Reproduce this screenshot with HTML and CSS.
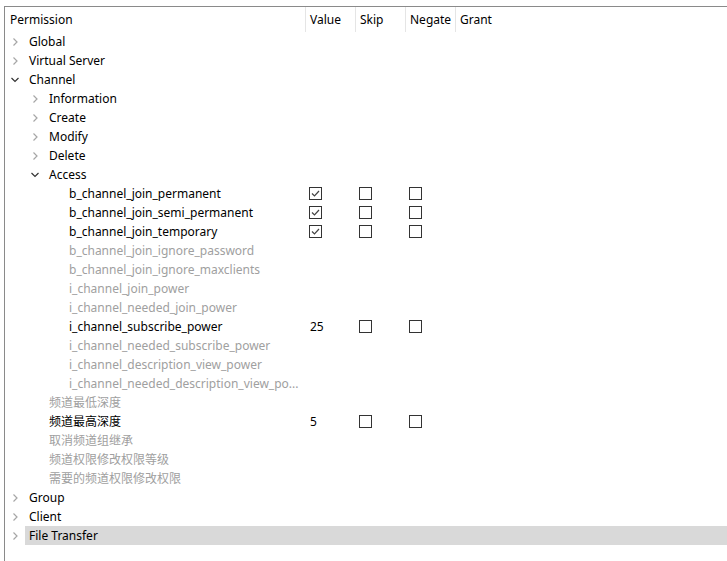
FILE: index.html
```html
<!DOCTYPE html>
<html>
<head>
<meta charset="utf-8">
<link rel="stylesheet" href="styles.css">
</head>
<body>
<div class="panel">
  <div class="header">
    <div class="h-name">Permission</div>
    <div class="h-col">Value</div>
    <div class="h-col">Skip</div>
    <div class="h-col">Negate</div>
    <div class="h-col h-last">Grant</div>
  </div>
  <div class="tree">
    <div class="row l0"><span class="arrow"><svg viewBox="0 0 8 10" width="8" height="10"><polyline points="2.5,1.5 6,5 2.5,8.5" class="chev"/></svg></span><div class="main"><span class="label">Global</span></div></div>
    <div class="row l0"><span class="arrow"><svg viewBox="0 0 8 10" width="8" height="10"><polyline points="2.5,1.5 6,5 2.5,8.5" class="chev"/></svg></span><div class="main"><span class="label">Virtual Server</span></div></div>
    <div class="row l0"><span class="arrow"><svg viewBox="0 0 10 8" width="10" height="8"><polyline points="1.5,2 5,5.5 8.5,2" class="chev open"/></svg></span><div class="main"><span class="label">Channel</span></div></div>
    <div class="row l1"><span class="arrow"><svg viewBox="0 0 8 10" width="8" height="10"><polyline points="2.5,1.5 6,5 2.5,8.5" class="chev"/></svg></span><div class="main"><span class="label">Information</span></div></div>
    <div class="row l1"><span class="arrow"><svg viewBox="0 0 8 10" width="8" height="10"><polyline points="2.5,1.5 6,5 2.5,8.5" class="chev"/></svg></span><div class="main"><span class="label">Create</span></div></div>
    <div class="row l1"><span class="arrow"><svg viewBox="0 0 8 10" width="8" height="10"><polyline points="2.5,1.5 6,5 2.5,8.5" class="chev"/></svg></span><div class="main"><span class="label">Modify</span></div></div>
    <div class="row l1"><span class="arrow"><svg viewBox="0 0 8 10" width="8" height="10"><polyline points="2.5,1.5 6,5 2.5,8.5" class="chev"/></svg></span><div class="main"><span class="label">Delete</span></div></div>
    <div class="row l1"><span class="arrow"><svg viewBox="0 0 10 8" width="10" height="8"><polyline points="1.5,2 5,5.5 8.5,2" class="chev open"/></svg></span><div class="main"><span class="label">Access</span></div></div>

    <div class="row l2"><span class="arrow"></span><div class="main"><span class="label">b_channel_join_permanent</span><span class="cell"><span class="cb"><svg viewBox="0 0 11 11" width="11" height="11"><polyline points="2,5.5 4.5,8 9,3" class="tick"/></svg></span></span><span class="cell"><span class="cb"></span></span><span class="cell"><span class="cb"></span></span></div></div>
    <div class="row l2"><span class="arrow"></span><div class="main"><span class="label">b_channel_join_semi_permanent</span><span class="cell"><span class="cb"><svg viewBox="0 0 11 11" width="11" height="11"><polyline points="2,5.5 4.5,8 9,3" class="tick"/></svg></span></span><span class="cell"><span class="cb"></span></span><span class="cell"><span class="cb"></span></span></div></div>
    <div class="row l2"><span class="arrow"></span><div class="main"><span class="label">b_channel_join_temporary</span><span class="cell"><span class="cb"><svg viewBox="0 0 11 11" width="11" height="11"><polyline points="2,5.5 4.5,8 9,3" class="tick"/></svg></span></span><span class="cell"><span class="cb"></span></span><span class="cell"><span class="cb"></span></span></div></div>
    <div class="row l2 dis"><span class="arrow"></span><div class="main"><span class="label">b_channel_join_ignore_password</span></div></div>
    <div class="row l2 dis"><span class="arrow"></span><div class="main"><span class="label">b_channel_join_ignore_maxclients</span></div></div>
    <div class="row l2 dis"><span class="arrow"></span><div class="main"><span class="label">i_channel_join_power</span></div></div>
    <div class="row l2 dis"><span class="arrow"></span><div class="main"><span class="label">i_channel_needed_join_power</span></div></div>
    <div class="row l2"><span class="arrow"></span><div class="main"><span class="label">i_channel_subscribe_power</span><span class="cell val">25</span><span class="cell"><span class="cb"></span></span><span class="cell"><span class="cb"></span></span></div></div>
    <div class="row l2 dis"><span class="arrow"></span><div class="main"><span class="label">i_channel_needed_subscribe_power</span></div></div>
    <div class="row l2 dis"><span class="arrow"></span><div class="main"><span class="label">i_channel_description_view_power</span></div></div>
    <div class="row l2 dis"><span class="arrow"></span><div class="main"><span class="label">i_channel_needed_description_view_po...</span></div></div>

    <div class="row l1 dis"><span class="arrow"></span><div class="main"><span class="label cjk">频道最低深度</span></div></div>
    <div class="row l1"><span class="arrow"></span><div class="main"><span class="label cjk">频道最高深度</span><span class="cell val">5</span><span class="cell"><span class="cb"></span></span><span class="cell"><span class="cb"></span></span></div></div>
    <div class="row l1 dis"><span class="arrow"></span><div class="main"><span class="label cjk">取消频道组继承</span></div></div>
    <div class="row l1 dis"><span class="arrow"></span><div class="main"><span class="label cjk">频道权限修改权限等级</span></div></div>
    <div class="row l1 dis"><span class="arrow"></span><div class="main"><span class="label cjk">需要的频道权限修改权限</span></div></div>

    <div class="row l0"><span class="arrow"><svg viewBox="0 0 8 10" width="8" height="10"><polyline points="2.5,1.5 6,5 2.5,8.5" class="chev"/></svg></span><div class="main"><span class="label">Group</span></div></div>
    <div class="row l0"><span class="arrow"><svg viewBox="0 0 8 10" width="8" height="10"><polyline points="2.5,1.5 6,5 2.5,8.5" class="chev"/></svg></span><div class="main"><span class="label">Client</span></div></div>
    <div class="row l0 sel"><span class="arrow"><svg viewBox="0 0 8 10" width="8" height="10"><polyline points="2.5,1.5 6,5 2.5,8.5" class="chev"/></svg></span><div class="main"><span class="label">File Transfer</span></div></div>
  </div>
</div>
</body>
</html>
```

FILE: styles.css
```css
html, body {
  margin: 0;
  padding: 0;
  background: #ffffff;
}
body {
  font-family: "Noto Sans", "Noto Sans CJK SC", sans-serif;
  font-size: 12px;
  color: #000;
  overflow: hidden;
}
.panel {
  margin: 6px 0 0 4px;
  height: 555px;
  border-top: 1px solid #8a8a8a;
  border-left: 1px solid #8a8a8a;
  box-sizing: border-box;
}
.header {
  display: flex;
  height: 25px;
  align-items: stretch;
}
.h-name {
  width: 300px;
  padding-left: 5px;
  box-sizing: border-box;
  display: flex;
  align-items: center;
}
.h-col {
  width: 50px;
  padding-left: 4px;
  box-sizing: border-box;
  border-left: 1px solid #e5e5e5;
  display: flex;
  align-items: center;
}
.h-last {
  width: auto;
  flex: 1;
}
.row {
  display: flex;
  height: 19px;
  align-items: stretch;
}
.row.l1 { padding-left: 20px; }
.row.l2 { padding-left: 40px; }
.arrow {
  width: 20px;
  flex: none;
  display: flex;
  align-items: center;
  justify-content: center;
}
.chev {
  fill: none;
  stroke: #a6a6a6;
  stroke-width: 1.2;
}
.chev.open {
  stroke: #333;
}
.main {
  flex: 1;
  display: flex;
  align-items: center;
}
.label {
  padding-left: 4px;
  padding-right: 2px;
  box-sizing: border-box;
  white-space: nowrap;
  flex: none;
}
.label.cjk {
  line-height: 17px;
  margin-top: -1px;
}
.l0 .label { width: 280px; }
.l1 .label { width: 260px; }
.l2 .label { width: 240px; }
.dis { color: #a0a0a0; }
.sel .main { background: #d9d9d9; }
.cell {
  width: 50px;
  flex: none;
  padding-left: 4px;
  box-sizing: border-box;
  display: flex;
  align-items: center;
}
.cell.val { padding-left: 5px; }
.cb {
  width: 13px;
  height: 13px;
  box-sizing: border-box;
  border: 1px solid #333;
  background: #fff;
  display: flex;
  align-items: center;
  justify-content: center;
}
.tick {
  fill: none;
  stroke: #444;
  stroke-width: 1.2;
}
```
